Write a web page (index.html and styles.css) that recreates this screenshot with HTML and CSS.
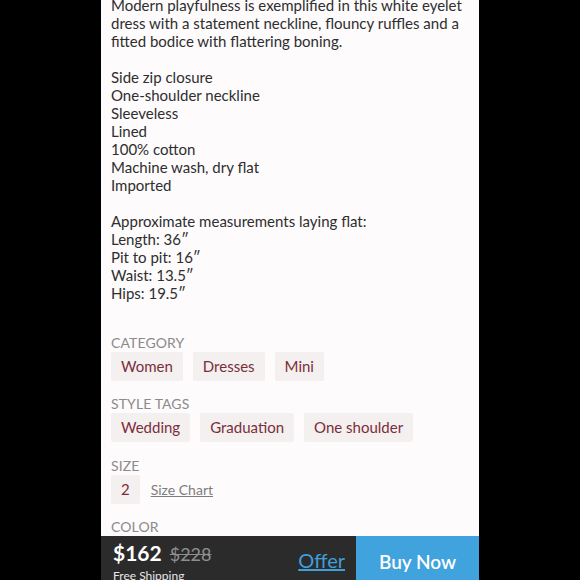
FILE: index.html
```html
<!DOCTYPE html>
<html>
<head>
<meta charset="utf-8">
<link rel="stylesheet" href="styles.css">
</head>
<body>
<div class="page">
  <div class="column">
    <div class="content">
      <div class="desc">
        <p>Modern playfulness is exemplified in this white eyelet dress with a statement neckline, flouncy ruffles and a fitted bodice with flattering boning.</p>
        <p>Side zip closure<br>One-shoulder neckline<br>Sleeveless<br>Lined<br>100% cotton<br>Machine wash, dry flat<br>Imported</p>
        <p>Approximate measurements laying flat:<br>Length: 36″<br>Pit to pit: 16″<br>Waist: 13.5″<br>Hips: 19.5″</p>
      </div>
      <div class="section">
        <div class="label">CATEGORY</div>
        <div class="chips">
          <span class="chip">Women</span>
          <span class="chip">Dresses</span>
          <span class="chip">Mini</span>
        </div>
      </div>
      <div class="section">
        <div class="label">STYLE TAGS</div>
        <div class="chips">
          <span class="chip">Wedding</span>
          <span class="chip">Graduation</span>
          <span class="chip">One shoulder</span>
        </div>
      </div>
      <div class="section size-section">
        <div class="label">SIZE</div>
        <div class="chips">
          <span class="chip">2</span>
          <a class="size-chart">Size Chart</a>
        </div>
      </div>
      <div class="section">
        <div class="label">COLOR</div>
      </div>
    </div>
    <div class="bar">
      <div class="bar-left">
        <div class="price-block">
          <div class="prices"><span class="price">$162</span><span class="orig">$228</span></div>
          <div class="ship">Free Shipping</div>
        </div>
        <a class="offer">Offer</a>
      </div>
      <div class="buy">Buy Now</div>
    </div>
  </div>
</div>
</body>
</html>
```

FILE: styles.css
```css
html, body {
  margin: 0;
  padding: 0;
  background: #000;
}
.page {
  width: 580px;
  height: 580px;
  display: flex;
  justify-content: flex-start;
  overflow: hidden;
}
.column {
  margin-left: 101px;
  width: 378px;
  height: 580px;
  background: #fdfbfc;
  display: flex;
  flex-direction: column;
  font-family: Lato, "Noto Sans", sans-serif;
}
.content {
  flex: 1;
  overflow: hidden;
  padding-left: 10px;
  padding-right: 10px;
}
.desc {
  margin-top: -4px;
  padding-bottom: 32px;
  color: #2e2e2e;
  font-size: 15px;
  line-height: 18px;
}
.desc p {
  margin: 0 0 18px 0;
}
.desc p:last-child {
  margin-bottom: 0;
}
.section + .section {
  margin-top: 14px;
}
.section + .size-section {
  margin-top: 15px;
}
.label {
  color: #8c8a8a;
  font-size: 14px;
  line-height: 18px;
  letter-spacing: 0.1px;
}
.chips {
  display: flex;
  align-items: center;
  gap: 10px;
}
.chip {
  background: #f4f0ef;
  color: #7a2e3c;
  font-size: 15px;
  height: 29px;
  line-height: 29px;
  padding: 0 10px;
  border-radius: 2px;
}
.size-chart {
  color: #7d7d7d;
  font-size: 14px;
  text-decoration: underline;
  margin-left: 1px;
}
.bar {
  height: 44px;
  display: flex;
  flex-shrink: 0;
}
.bar-left {
  width: 255px;
  background: #2b2b2b;
  display: flex;
  justify-content: space-between;
  align-items: flex-start;
  padding: 0 11px 0 12px;
  box-sizing: border-box;
}
.price-block {
  display: flex;
  flex-direction: column;
  padding-top: 4px;
}
.prices {
  display: flex;
  align-items: baseline;
  gap: 8px;
  line-height: 26px;
}
.price {
  color: #fff;
  font-weight: 700;
  font-size: 21px;
}
.orig {
  color: #8f8f8f;
  font-size: 18px;
  text-decoration: line-through;
}
.ship {
  color: #e8e8e8;
  font-size: 12px;
  line-height: 14px;
  margin-top: 2px;
}
.offer {
  color: #3f9fd9;
  font-size: 20px;
  text-decoration: underline;
  margin-top: 13px;
  line-height: 22px;
}
.buy {
  flex: 1;
  background: #41a3dd;
  color: #fff;
  font-size: 19px;
  font-weight: 600;
  display: flex;
  align-items: center;
  justify-content: center;
  padding-top: 6px;
}
```
